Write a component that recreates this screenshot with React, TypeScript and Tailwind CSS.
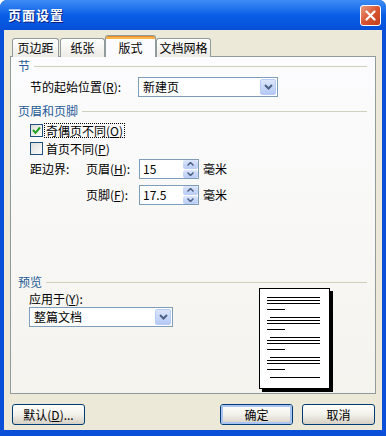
import React from 'react';

const font = { fontFamily: '"Noto Sans CJK SC", "Liberation Sans", sans-serif' };

function GroupHeader({ title }: { title: string }) {
  return (
    <div className="flex items-center h-[14px] leading-[14px]">
      <span className="text-[#1f5a96] text-[12px]">{title}</span>
      <div className="flex-1 h-px bg-[#d0d0bf] ml-[4px] mr-[8px]" />
    </div>
  );
}

function Chevron() {
  return (
    <svg width="9" height="6" viewBox="0 0 9 6">
      <path d="M1 1 L4.5 4.5 L8 1" stroke="#4d6185" strokeWidth="2" fill="none" />
    </svg>
  );
}

function Select({ value, width }: { value: string; width: string }) {
  return (
    <div className={`${width} h-[20px] border border-[#7f9db9] bg-white flex items-center`}>
      <span className="flex-1 pl-[4px] text-[12px] leading-[18px]">{value}</span>
      <div className="w-[16px] h-[16px] mr-[1px] rounded-[2px] bg-gradient-to-b from-[#dce6fb] to-[#b5c9f5] border border-[#b8cdf5] flex items-center justify-center">
        <Chevron />
      </div>
    </div>
  );
}

function Spin({ value }: { value: string }) {
  return (
    <div className="w-[60px] h-[20px] border border-[#7f9db9] bg-white flex items-center">
      <span className="flex-1 pl-[3px] text-[12px] leading-[18px]">{value}</span>
      <div className="w-[15px] h-[18px] flex flex-col gap-px">
        <div className="flex-1 rounded-[2px] bg-gradient-to-b from-[#dce6fb] to-[#b8cbf5] flex items-center justify-center">
          <svg width="7" height="4" viewBox="0 0 7 4">
            <path d="M0.5 3.5 L3.5 0.5 L6.5 3.5" stroke="#4d6185" strokeWidth="1.5" fill="none" />
          </svg>
        </div>
        <div className="flex-1 rounded-[2px] bg-gradient-to-b from-[#dce6fb] to-[#b8cbf5] flex items-center justify-center">
          <svg width="7" height="4" viewBox="0 0 7 4">
            <path d="M0.5 0.5 L3.5 3.5 L6.5 0.5" stroke="#4d6185" strokeWidth="1.5" fill="none" />
          </svg>
        </div>
      </div>
    </div>
  );
}

function Checkbox({ checked }: { checked?: boolean }) {
  return (
    <div className="w-[13px] h-[13px] border border-[#1c5180] bg-gradient-to-br from-[#dcdcd7] to-white flex items-center justify-center">
      {checked && (
        <svg width="9" height="9" viewBox="0 0 9 9">
          <path d="M1 4 L3.5 6.8 L8 1.5" stroke="#21a121" strokeWidth="2" fill="none" />
        </svg>
      )}
    </div>
  );
}

function Button({ children, focused }: { children: React.ReactNode; focused?: boolean }) {
  return (
    <div className="w-[73px] h-[21px] rounded-[3px] border border-[#003c74] bg-gradient-to-b from-white via-[#f2f1ea] to-[#d6d0c5] flex items-center justify-center">
      <div
        className={`w-full h-full rounded-[2px] flex items-center justify-center text-[12px] ${
          focused ? 'border-2 border-[#a9c4f0]' : ''
        }`}
      >
        {children}
      </div>
    </div>
  );
}

function PagePreview() {
  const groups = [299, 319, 339, 359];
  return (
    <div className="relative w-[74px] h-[104px]">
      <div className="absolute left-[3px] top-[3px] w-[71px] h-[101px] bg-black" />
      <div className="absolute left-0 top-0 w-[71px] h-[101px] bg-white border border-black">
        <svg width="69" height="99" viewBox="0 0 69 99">
          {groups.map((y, i) => {
            const top = y - 291;
            return (
              <g key={y} stroke="#000" strokeWidth="1">
                <line x1={i === 0 ? 7 : 10} y1={top + 0.5} x2="60" y2={top + 0.5} />
                <line x1="7" y1={top + 3.5} x2="60" y2={top + 3.5} />
                <line x1="7" y1={top + 6.5} x2="60" y2={top + 6.5} />
                <line x1="7" y1={top + 12.5} x2="25" y2={top + 12.5} />
              </g>
            );
          })}
          <line x1="10" y1="88.5" x2="60" y2="88.5" stroke="#000" strokeWidth="1" />
        </svg>
      </div>
    </div>
  );
}

export default function App() {
  return (
    <div className="w-[386px] h-[436px] bg-[#0a4fd8] flex flex-col rounded-t-[7px] overflow-hidden" style={font}>
      <div className="h-[30px] bg-gradient-to-b from-[#3d8cf5] via-[#0a5ee6] to-[#0750d8] flex items-center justify-between pl-[8px] pr-[5px]">
        <span className="text-white text-[13px] font-bold tracking-[1px] [text-shadow:1px_1px_#0a1f80]">页面设置</span>
        <div className="w-[21px] h-[21px] rounded-[3px] border border-white bg-gradient-to-br from-[#e89a80] via-[#d9542f] to-[#c2401f] flex items-center justify-center">
          <svg width="11" height="11" viewBox="0 0 11 11">
            <path d="M1.5 1.5 L9.5 9.5 M9.5 1.5 L1.5 9.5" stroke="white" strokeWidth="2.2" strokeLinecap="round" />
          </svg>
        </div>
      </div>

      <div className="flex-1 ml-[4px] mr-[4px] mb-[6px] bg-[#ece9d8] px-[6px] pt-[5px] flex flex-col text-[12px] text-black">
        <div className="flex items-end h-[22px] pl-[2px] -mb-px relative z-10">
          <div className="w-[47px] h-[19px] border border-b-0 border-[#919b9c] rounded-t-[3px] bg-gradient-to-b from-white to-[#ecebe6] flex items-center justify-center">页边距</div>
          <div className="w-[45px] h-[19px] ml-px border border-b-0 border-[#919b9c] rounded-t-[3px] bg-gradient-to-b from-white to-[#ecebe6] flex items-center justify-center">纸张</div>
          <div className="w-[51px] h-[22px] border border-b-0 border-[#919b9c] rounded-t-[3px] bg-[#fcfcfe] flex flex-col">
            <div className="h-[3px] bg-[#f7b64b] border-t border-[#e68b2c] rounded-t-[2px]" />
            <div className="flex-1 flex items-center justify-center">版式</div>
          </div>
          <div className="w-[55px] h-[19px] border border-b-0 border-[#919b9c] rounded-t-[3px] bg-gradient-to-b from-white to-[#ecebe6] flex items-center justify-center">文档网格</div>
        </div>

        <div className="w-[366px] h-[338px] border border-[#919b9c] bg-gradient-to-b from-[#fcfcfe] to-[#f4f3ee] pl-[7px] flex flex-col">
          <div className="mt-[2px]">
            <GroupHeader title="节" />
          </div>
          <div className="mt-[4px] flex items-center h-[20px] pl-[12px]">
            <span className="w-[108px]">节的起始位置(<u>R</u>):</span>
            <Select value="新建页" width="w-[140px]" />
          </div>
          <div className="mt-[7px]">
            <GroupHeader title="页眉和页脚" />
          </div>
          <div className="mt-[4px] flex items-center h-[16px] pl-[12px]">
            <Checkbox checked />
            <span className="ml-px px-px border border-dotted border-black leading-[13px]">奇偶页不同(<u>O</u>)</span>
          </div>
          <div className="mt-[2px] flex items-center h-[16px] pl-[12px]">
            <Checkbox />
            <span className="ml-[2px] px-px leading-[13px]">首页不同(<u>P</u>)</span>
          </div>
          <div className="mt-[3px] flex items-center h-[20px] pl-[12px]">
            <span className="w-[56px]">距边界:</span>
            <span className="w-[53px]">页眉(<u>H</u>):</span>
            <Spin value="15" />
            <span className="ml-[4px]">毫米</span>
          </div>
          <div className="mt-[6px] flex items-center h-[20px] pl-[68px]">
            <span className="w-[53px]">页脚(<u>F</u>):</span>
            <Spin value="17.5" />
            <span className="ml-[4px]">毫米</span>
          </div>
          <div className="mt-[70px]">
            <GroupHeader title="预览" />
          </div>
          <div className="flex pl-[11px] -mt-px">
            <div className="w-[230px] flex flex-col">
              <div className="mt-[4px] h-[14px] leading-[14px]">应用于(<u>Y</u>):</div>
              <div className="mt-[1px]">
                <Select value="整篇文档" width="w-[144px]" />
              </div>
            </div>
            <PagePreview />
          </div>
        </div>

        <div className="mt-[10px] flex items-center justify-between pl-[2px] pr-[1px]">
          <Button>默认(<u>D</u>)...</Button>
          <div className="flex gap-[9px]">
            <Button focused>确定</Button>
            <Button>取消</Button>
          </div>
        </div>
      </div>
    </div>
  );
}
